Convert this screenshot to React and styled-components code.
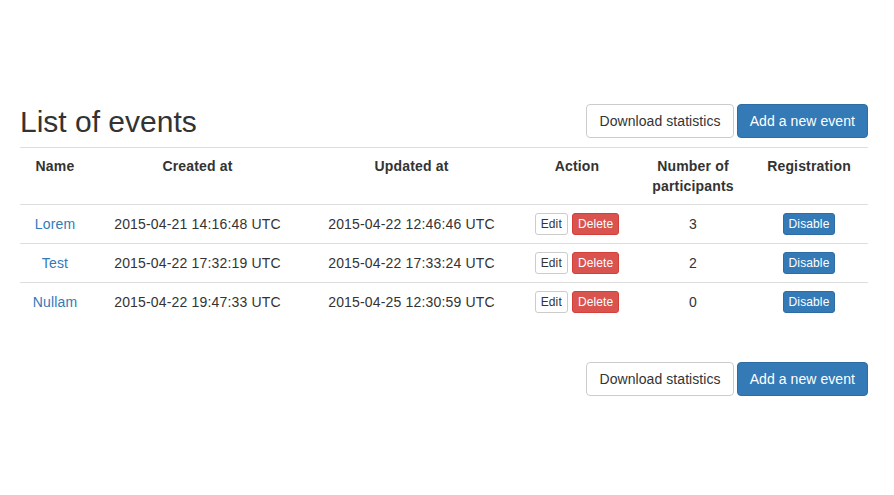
import React from "react";
import styled, { createGlobalStyle, css } from "styled-components";

const Global = createGlobalStyle`
  html, body { margin: 0; padding: 0; background: #fff; }
  body {
    font-family: "Liberation Sans", Arial, Helvetica, sans-serif;
    font-size: 14px;
    line-height: 1.42857143;
    color: #333;
    letter-spacing: 0.17px;
  }
  * { box-sizing: border-box; }
`;

const Page = styled.div`
  width: 894px;
  padding: 104px 26px 0 20px;
`;

const Header = styled.div`
  display: flex;
  justify-content: space-between;
  align-items: center;
  margin-bottom: 9px;
`;

const Title = styled.h2`
  margin: 0;
  font-size: 30px;
  font-weight: 500;
  line-height: 33px;
  letter-spacing: 0;
  color: #333;
`;

const ButtonGroup = styled.div`
  display: flex;
  gap: 3px;
  justify-content: flex-end;
`;

const variants = {
  default: css`
    color: #333;
    background: #fff;
    border-color: #ccc;
  `,
  primary: css`
    color: #fff;
    background: #337ab7;
    border-color: #2e6da4;
  `,
  danger: css`
    color: #fff;
    background: #d9534f;
    border-color: #d43f3a;
  `,
};

const Button = styled.button`
  font-family: inherit;
  display: inline-block;
  border: 1px solid transparent;
  cursor: pointer;
  white-space: nowrap;
  ${(p) => variants[p.$variant || "default"]}
  ${(p) =>
    p.$size === "xs"
      ? css`
          padding: 1px 5px;
          font-size: 12px;
          line-height: 1.5;
          border-radius: 3px;
          letter-spacing: 0.12px;
        `
      : css`
          padding: 6px 12px;
          font-size: 14px;
          line-height: 20px;
          border-radius: 4px;
          letter-spacing: 0.07px;
        `}
`;

const Table = styled.table`
  width: 100%;
  border-collapse: collapse;
  border-spacing: 0;
  table-layout: fixed;
  margin-bottom: 20px;
`;

const Th = styled.th`
  padding: 8px;
  line-height: 20px;
  font-weight: bold;
  text-align: center;
  vertical-align: top;
  border-top: 1px solid #ddd;
  border-bottom: 1px solid #ddd;
`;

const Td = styled.td`
  padding: 8px;
  line-height: 20px;
  text-align: center;
  vertical-align: middle;
  border-top: 1px solid #ddd;
  white-space: nowrap;
`;

const Link = styled.a`
  color: #337ab7;
  text-decoration: none;
`;

const Actions = styled.div`
  display: flex;
  justify-content: center;
  gap: 4px;
`;

const Footer = styled.div`
  margin-top: 41px;
`;

const events = [
  { name: "Lorem", created: "2015-04-21 14:16:48 UTC", updated: "2015-04-22 12:46:46 UTC", n: 3 },
  { name: "Test", created: "2015-04-22 17:32:19 UTC", updated: "2015-04-22 17:33:24 UTC", n: 2 },
  { name: "Nullam", created: "2015-04-22 19:47:33 UTC", updated: "2015-04-25 12:30:59 UTC", n: 0 },
];

const cols = [70, 215, 213, 118, 114, 118];

function TopButtons() {
  return (
    <ButtonGroup>
      <Button>Download statistics</Button>
      <Button $variant="primary">Add a new event</Button>
    </ButtonGroup>
  );
}

export default function App() {
  return (
    <Page>
      <Global />
      <Header>
        <Title>List of events</Title>
        <TopButtons />
      </Header>
      <Table>
        <colgroup>
          {cols.map((w, i) => (
            <col key={i} style={{ width: w }} />
          ))}
        </colgroup>
        <thead>
          <tr>
            <Th>Name</Th>
            <Th>Created at</Th>
            <Th>Updated at</Th>
            <Th>Action</Th>
            <Th>Number of participants</Th>
            <Th>Registration</Th>
          </tr>
        </thead>
        <tbody>
          {events.map((e) => (
            <tr key={e.name}>
              <Td>
                <Link href="#">{e.name}</Link>
              </Td>
              <Td>{e.created}</Td>
              <Td>{e.updated}</Td>
              <Td>
                <Actions>
                  <Button $size="xs">Edit</Button>
                  <Button $size="xs" $variant="danger">Delete</Button>
                </Actions>
              </Td>
              <Td>{e.n}</Td>
              <Td>
                <Button $size="xs" $variant="primary">Disable</Button>
              </Td>
            </tr>
          ))}
        </tbody>
      </Table>
      <Footer>
        <TopButtons />
      </Footer>
    </Page>
  );
}
